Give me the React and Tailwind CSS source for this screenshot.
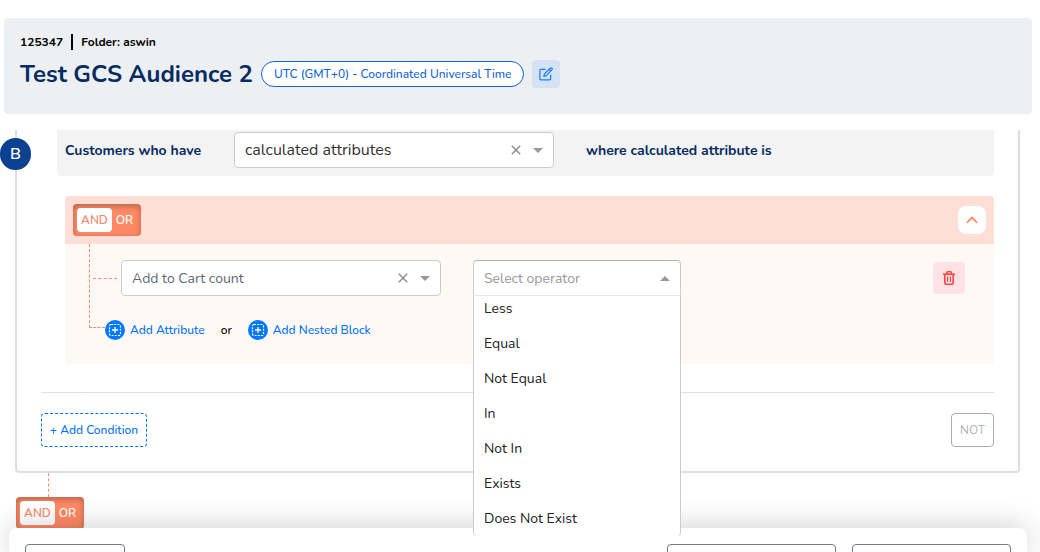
import React from "react";

const operators = ["Less", "Equal", "Not Equal", "In", "Not In", "Exists", "Does Not Exist"];

function Caret({ up }) {
  return (
    <svg width="10" height="5" viewBox="0 0 10 5" fill="#999" aria-hidden="true">
      <path d={up ? "M0 5 5 0l5 5z" : "M0 0h10L5 5z"} />
    </svg>
  );
}

function ClearableSelect({ label, value, textClass }) {
  return (
    <div className="relative w-80 shrink-0">
      <select
        aria-label={label}
        defaultValue={value}
        className={`block h-9 w-full appearance-none rounded border border-[#ccc] bg-white pl-[10px] pr-16 ${textClass}`}
      >
        <option>{value}</option>
      </select>
      <div className="absolute inset-y-0 right-[11px] flex items-center gap-3">
        <button type="button" aria-label={`Clear ${label}`}>
          <svg width="10" height="10" viewBox="0 0 10 10" stroke="#8f8f8f" strokeWidth="1.5" aria-hidden="true">
            <path d="M.8.8l8.4 8.4M9.2.8L.8 9.2" />
          </svg>
        </button>
        <Caret />
      </div>
    </div>
  );
}

function LogicToggle() {
  return (
    <div className="flex h-8 w-[68px] items-center rounded bg-[#ff8a66] px-1 text-[12px] font-semibold shadow-[inset_0_2px_6px_rgba(0,0,0,0.3)]">
      <button type="button" aria-pressed="true" className="h-6 w-[35px] shrink-0 rounded bg-white text-[#f58a6a]">
        AND
      </button>
      <button type="button" aria-pressed="false" className="h-6 flex-1 text-white">
        OR
      </button>
    </div>
  );
}

function AddLink({ children }) {
  return (
    <button type="button" className="flex h-5 items-center gap-[5px] text-[#0073f7]">
      <svg width="20" height="20" viewBox="0 0 20 20" fill="none" stroke="#fff" aria-hidden="true">
        <circle cx="10" cy="10" r="10" fill="#0078ff" stroke="none" />
        <rect x="4.5" y="4.5" width="11" height="11" rx="1.5" strokeWidth="1.2" strokeDasharray="2 1.2" />
        <path d="M10 7v6M7 10h6" strokeWidth="1.3" />
      </svg>
      {children}
    </button>
  );
}

function OperatorSelect() {
  return (
    <div className="relative w-52 shrink-0 text-[14px]">
      <button
        type="button"
        role="combobox"
        aria-label="Operator"
        aria-expanded="true"
        aria-controls="operators"
        className="flex h-9 w-full items-center justify-between rounded-t border border-[#ccc] border-t-[#b3b3b3] border-b-[#e6e6e6] bg-white px-[10px] text-[#999]"
      >
        Select operator
        <Caret up />
      </button>
      <ul
        id="operators"
        role="listbox"
        className="absolute inset-x-0 top-full z-20 flex h-60 flex-col justify-end overflow-hidden rounded-b border-x border-[#ccc] bg-white text-[#222]"
      >
        {operators.map((name) => (
          <li key={name} role="option" aria-selected="false" className="flex h-[35px] shrink-0 items-center px-[10px]">
            {name}
          </li>
        ))}
      </ul>
    </div>
  );
}

function Header() {
  return (
    <header className="mt-[18px] mr-2 ml-1 flex h-24 shrink-0 flex-col gap-[10px] rounded bg-[#edf0f3] p-4">
      <div className="flex h-4 items-center text-[12px] font-bold text-black">
        <span className="border-r-2 border-black pr-2 leading-4">125347</span>
        <span className="pl-2">Folder: aswin</span>
      </div>
      <div className="flex h-7 items-center gap-2">
        <h1 className="text-[24px] font-bold whitespace-nowrap text-[#062b61]">Test GCS Audience 2</h1>
        <span className="flex h-[26px] items-center rounded-full border border-[#1264d8] bg-white px-3 text-[12px] font-medium whitespace-nowrap text-[#1264d8]">
          UTC (GMT+0) - Coordinated Universal Time
        </span>
        <button type="button" aria-label="Edit" className="flex size-7 items-center justify-center rounded bg-[#d3e3f4]">
          <svg width="14" height="14" viewBox="0 0 14 14" fill="none" stroke="#1a7cf5" strokeWidth="1.2" strokeLinejoin="round" strokeLinecap="round" aria-hidden="true">
            <path d="M6.2 2.3H2.2A1.3 1.3 0 0 0 .9 3.6v8a1.3 1.3 0 0 0 1.3 1.3h8.2a1.3 1.3 0 0 0 1.3-1.3V8" />
            <path d="M11.2 1.2a1.1 1.1 0 0 1 1.6 1.6L7.3 8.6l-2.5.7.6-2.4zM10.1 2.3l1.6 1.6" />
          </svg>
        </button>
      </div>
    </header>
  );
}

function AttributeBlock() {
  return (
    <section className="mt-5 ml-6">
      <div className="flex h-12 items-center justify-between rounded-t bg-[#ffdfd5] px-2">
        <LogicToggle />
        <button type="button" aria-label="Collapse" className="flex size-7 items-center justify-center rounded-lg bg-white">
          <svg width="12" height="8" viewBox="0 0 12 8" fill="none" stroke="#ff8a66" strokeWidth="1.8" aria-hidden="true">
            <path d="M.9 6.7 6 1.6l5.1 5.1" />
          </svg>
        </button>
      </div>
      <div className="flex rounded-b bg-[#fff9f6] pl-6">
        <div className="h-[84px] w-4 shrink-0 border-b border-l border-dashed border-[#f58a6a]" />
        <div className="flex min-w-0 flex-1 flex-col gap-6 pt-4 pb-6">
          <div className="flex items-center pr-[29px]">
            <div className="-ml-3 w-6 shrink-0 border-t border-dashed border-[#ff8a66]" />
            <div className="ml-1 flex gap-8">
              <ClearableSelect label="Attribute" value="Add to Cart count" textClass="text-[14px] text-[#5c6873]" />
              <OperatorSelect />
            </div>
            <button type="button" aria-label="Delete" className="ml-auto flex size-8 items-center justify-center rounded bg-[#ffe3e4]">
              <svg width="12" height="14" viewBox="0 0 12 14" fill="none" stroke="#ff4245" aria-hidden="true">
                <path d="M0 3.2h12" strokeWidth="1.6" />
                <path d="M3.7 3V1.7q0-.9.9-.9h2.8q.9 0 .9.9V3" strokeWidth="1.4" />
                <path d="M1.8 3.5v8.2q0 1.5 1.5 1.5h5.4q1.5 0 1.5-1.5V3.5" strokeWidth="1.6" />
                <path d="M4.6 5.6v5.2M7.4 5.6v5.2" strokeWidth="1.2" />
              </svg>
            </button>
          </div>
          <div className="flex items-center gap-4 text-[12px] font-medium">
            <AddLink>Add Attribute</AddLink>
            <span className="text-black">or</span>
            <AddLink>Add Nested Block</AddLink>
          </div>
        </div>
      </div>
    </section>
  );
}

export default function App() {
  return (
    <div className="flex h-screen flex-col overflow-hidden bg-white font-['Nunito','Lato',sans-serif]">
      <Header />
      <main className="mt-4 min-h-0 flex-1">
        <section className="relative mr-5 ml-[15px] rounded-b border-x-2 border-b-2 border-[#d9dfe4] px-6 pb-6">
          <span className="absolute top-2 -left-[17px] flex h-8 w-[31px] items-center justify-center rounded-full bg-[#0a4191] text-[16px] font-semibold text-white">
            B
          </span>
          <div className="ml-4 flex h-[46px] items-start rounded-b bg-[#f3f3f3] pt-[2px] pl-2 text-[14px] font-bold text-[#062b61]">
            <span className="w-[169px] shrink-0 leading-[38px]">Customers who have</span>
            <ClearableSelect label="Condition type" value="calculated attributes" textClass="text-[16px] font-normal text-[#333]" />
            <span className="pl-8 leading-[38px]">where calculated attribute is</span>
          </div>
          <AttributeBlock />
          <div className="mt-7 flex items-center justify-between border-t border-[#d9dfe4] pt-5 text-[12px]">
            <button type="button" className="h-[34px] w-[106px] rounded border border-dashed border-[#0073f7] font-medium text-[#0073f7]">
              + Add Condition
            </button>
            <button type="button" className="h-[34px] w-[43px] rounded border border-[#a8abb0] text-[#aeb1b5]">
              NOT
            </button>
          </div>
        </section>
        <div className="ml-12 h-6 w-px border-l border-dashed border-[#ff8a66]" />
        <div className="ml-4">
          <LogicToggle />
        </div>
      </main>
      <footer className="relative z-10 mr-[13px] ml-[9px] flex h-6 shrink-0 items-start gap-4 rounded-t-lg bg-white px-4 pt-4 shadow-[0_0_30px_rgba(0,0,0,0.22)]">
        <button type="button" aria-label="Cancel" className="mr-auto h-8 w-[100px] shrink-0 rounded border border-[#737b86]" />
        <button type="button" aria-label="Save draft" className="h-8 w-[169px] shrink-0 rounded border border-[#737b86]" />
        <button type="button" aria-label="Save" className="h-8 w-[159px] shrink-0 rounded border border-[#737b86]" />
      </footer>
    </div>
  );
}
